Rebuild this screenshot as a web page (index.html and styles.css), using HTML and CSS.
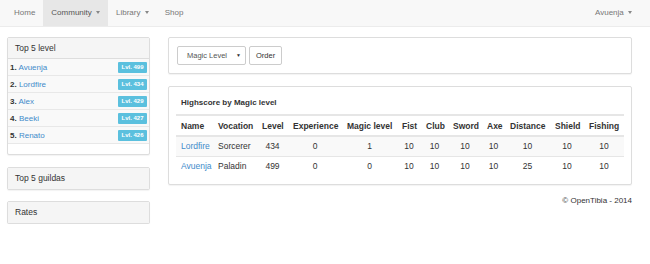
FILE: index.html
```html
<!DOCTYPE html>
<html>
<head>
<meta charset="utf-8">
<link rel="stylesheet" href="styles.css">
</head>
<body>
<nav class="navbar">
  <ul class="nav">
    <li class="nav-item">Home</li>
    <li class="nav-item active">Community <span class="caret"></span></li>
    <li class="nav-item">Library <span class="caret"></span></li>
    <li class="nav-item">Shop</li>
  </ul>
  <ul class="nav">
    <li class="nav-item user">Avuenja <span class="caret"></span></li>
  </ul>
</nav>
<div class="container">
  <aside class="sidebar">
    <div class="panel">
      <div class="panel-heading">Top 5 level</div>
      <ul class="list">
        <li class="list-item"><span><b>1.</b> <a>Avuenja</a></span><span class="badge">Lvl. 499</span></li>
        <li class="list-item"><span><b>2.</b> <a>Lordfire</a></span><span class="badge">Lvl. 434</span></li>
        <li class="list-item"><span><b>3.</b> <a>Alex</a></span><span class="badge">Lvl. 429</span></li>
        <li class="list-item"><span><b>4.</b> <a>Beeki</a></span><span class="badge">Lvl. 427</span></li>
        <li class="list-item"><span><b>5.</b> <a>Renato</a></span><span class="badge">Lvl. 426</span></li>
      </ul>
      <div class="panel-foot"></div>
    </div>
    <div class="panel">
      <div class="panel-heading solo">Top 5 guildas</div>
    </div>
    <div class="panel rates">
      <div class="panel-heading solo">Rates</div>
    </div>
  </aside>
  <main class="main">
    <div class="panel box filter">
      <div class="select">Magic Level <span class="tri">▼</span></div>
      <div class="btn">Order</div>
    </div>
    <div class="panel box scores">
      <div class="title">Highscore by Magic level</div>
      <table class="table">
        <colgroup>
          <col style="width:37px"><col style="width:44px"><col style="width:31px"><col style="width:54px"><col style="width:55px"><col style="width:24px"><col style="width:27px"><col style="width:34px"><col style="width:23px"><col style="width:45px"><col style="width:34px"><col style="width:40px">
        </colgroup>
        <thead>
          <tr><th>Name</th><th>Vocation</th><th>Level</th><th>Experience</th><th>Magic level</th><th>Fist</th><th>Club</th><th>Sword</th><th>Axe</th><th>Distance</th><th>Shield</th><th>Fishing</th></tr>
        </thead>
        <tbody>
          <tr class="odd"><td class="l"><a>Lordfire</a></td><td class="l">Sorcerer</td><td>434</td><td>0</td><td>1</td><td>10</td><td>10</td><td>10</td><td>10</td><td>10</td><td>10</td><td>10</td></tr>
          <tr><td class="l"><a>Avuenja</a></td><td class="l">Paladin</td><td>499</td><td>0</td><td>0</td><td>10</td><td>10</td><td>10</td><td>10</td><td>25</td><td>10</td><td>10</td></tr>
        </tbody>
      </table>
    </div>
    <div class="footer">© OpenTibia - 2014</div>
  </main>
</div>
</body>
</html>
```
FILE: styles.css
```css
* { box-sizing: border-box; }
body {
  margin: 0;
  font-family: "Liberation Sans", Arial, sans-serif;
  font-size: 8.5px;
  color: #333;
  background: #fff;
}
a { color: #428bca; }
.navbar {
  height: 27px;
  background: #f8f8f8;
  border-bottom: 1px solid #ececec;
  display: flex;
  justify-content: space-between;
  padding: 0 10px 0 6px;
}
.nav {
  list-style: none;
  margin: 0;
  padding: 0;
  display: flex;
}
.nav-item {
  color: #777;
  padding: 0 8px;
  line-height: 26px;
  height: 26px;
  font-size: 8px;
}
.nav-item.active {
  background: #e7e7e7;
  color: #555;
}
.nav-item.user { padding-right: 8px; }
.caret {
  display: inline-block;
  width: 0;
  height: 0;
  border-top: 3px solid #888;
  border-left: 2.5px solid transparent;
  border-right: 2.5px solid transparent;
  vertical-align: middle;
  margin-left: 2px;
}
.container {
  display: flex;
  padding: 10px 18px 0 7px;
  gap: 18px;
}
.sidebar {
  width: 143px;
  flex: none;
  display: flex;
  flex-direction: column;
  gap: 12px;
}
.sidebar .rates { margin-top: -1px; }
.panel {
  border: 1px solid #ddd;
  border-radius: 2px;
  background: #fff;
  box-shadow: 0 1px 1px rgba(0,0,0,0.05);
}
.panel-heading {
  background: #f5f5f5;
  color: #333;
  height: 21px;
  line-height: 20px;
  padding: 0 7px;
  font-size: 8.5px;
  border-bottom: 1px solid #ddd;
}
.panel-heading.solo { border-bottom: none; }
.list { list-style: none; margin: 0; padding: 0; }
.list-item {
  height: 17px;
  display: flex;
  justify-content: space-between;
  align-items: center;
  padding: 0 2px 0 2px;
  border-bottom: 1px solid #e8e8e8;
  background: #f9f9f9;
  font-size: 8px;
}
.list-item b { color: #333; }
.badge {
  background: #5bc0de;
  color: #fff;
  font-size: 6px;
  font-weight: bold;
  height: 11px;
  line-height: 11px;
  width: 29px;
  text-align: center;
  border-radius: 1px;
}
.panel-foot { height: 10px; }
.main {
  flex: 1;
  display: flex;
  flex-direction: column;
}
.box { width: 464px; }
.filter {
  height: 37px;
  display: flex;
  align-items: center;
  padding: 0 8px;
  gap: 3px;
}
.select {
  width: 69px;
  height: 19px;
  border: 1px solid #ccc;
  border-radius: 2px;
  line-height: 17px;
  padding-left: 9px;
  color: #555;
  font-size: 7.5px;
  position: relative;
}
.tri {
  position: absolute;
  right: 4px;
  top: 0;
  font-size: 5px;
  color: #333;
}
.btn {
  height: 19px;
  border: 1px solid #ccc;
  border-radius: 2px;
  line-height: 17px;
  padding: 0 6px;
  color: #333;
  font-size: 7.5px;
}
.scores {
  margin-top: 12px;
  padding: 11px 7px 8px 7px;
}
.title {
  font-weight: bold;
  font-size: 8px;
  margin-left: 5px;
  height: 16px;
}
.table {
  border-collapse: collapse;
  table-layout: fixed;
  width: 448px;
  font-size: 8.5px;
}
.table th {
  text-align: left;
  font-weight: bold;
  padding: 0 0 0 5px;
  height: 21px;
  border-top: 2px solid #e6e6e6;
  border-bottom: 2px solid #e6e6e6;
  white-space: nowrap;
}
.table td {
  text-align: center;
  height: 20px;
  padding: 0;
  border-bottom: 1px solid #e6e6e6;
}
.table tbody tr:last-child td { border-bottom: none; }
.table td.l { text-align: left; padding-left: 5px; }
.table tr.odd td { background: #f9f9f9; }
.footer {
  text-align: right;
  margin-top: 11px;
  font-size: 8px;
  color: #333;
}
```
